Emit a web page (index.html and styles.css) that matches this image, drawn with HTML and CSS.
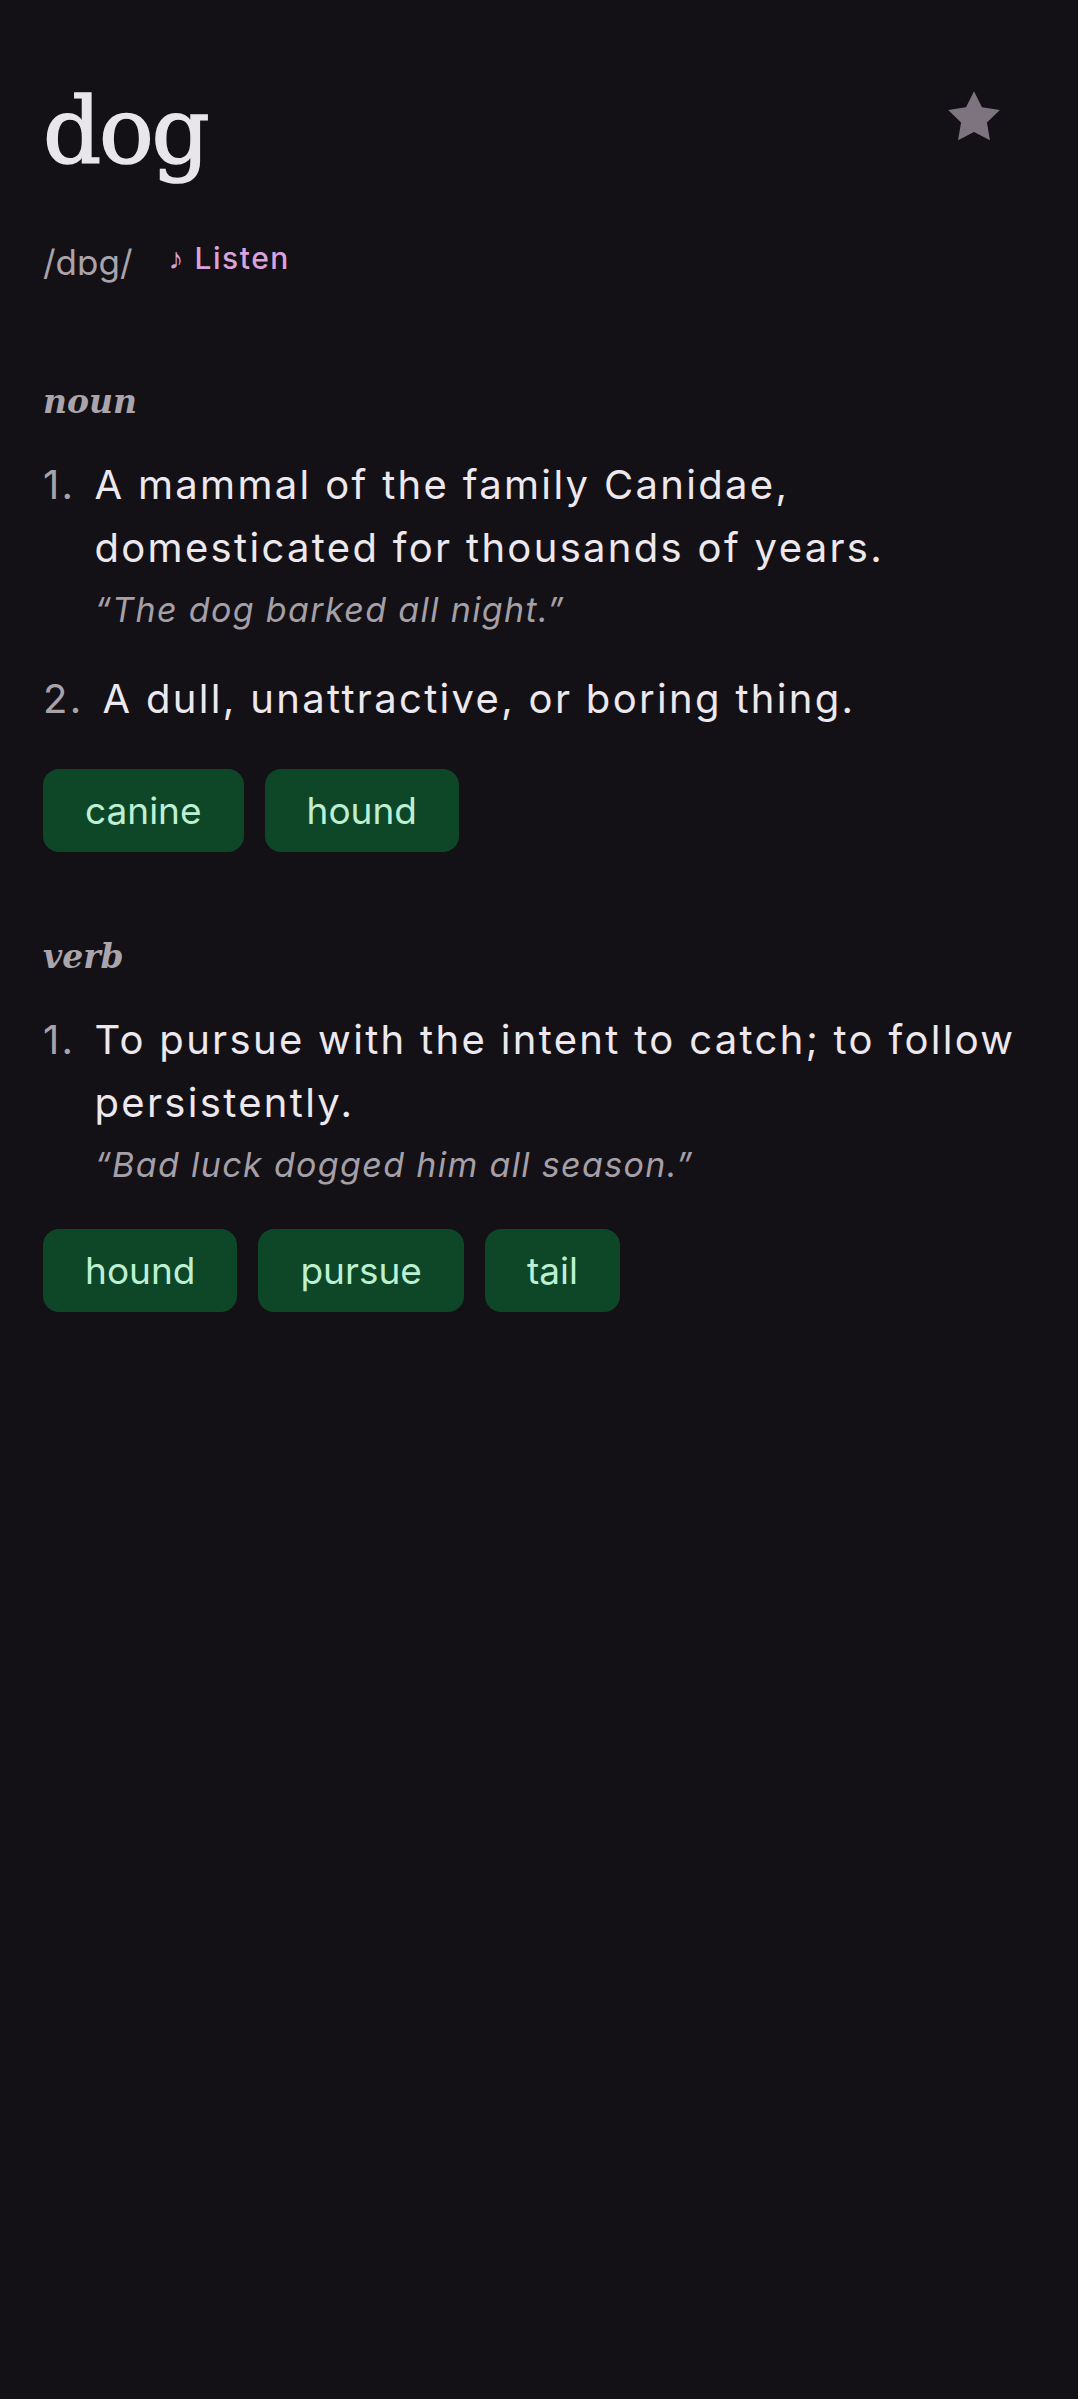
FILE: index.html
```html
<!DOCTYPE html>
<html lang="en">
<head>
<meta charset="utf-8">
<title>dog</title>
<link rel="stylesheet" href="styles.css">
</head>
<body>
<main class="page">
  <header class="head">
    <h1 class="word">dog</h1>
    <button class="fav" aria-label="Favourite">
      <svg viewBox="0 0 24 24" width="62" height="62"><polygon points="12,2 15.09,8.26 22,9.27 17,14.14 18.18,21.02 12,17.77 5.82,21.02 7,14.14 2,9.27 8.91,8.26" fill="#7d7480"/></svg>
    </button>
  </header>
  <div class="pron">
    <span class="ipa">/dɒg/</span>
    <button class="listen">♪ Listen</button>
  </div>

  <section class="pos">
    <h2 class="pos-label">noun</h2>
    <ol class="defs">
      <li class="def">
        <span class="num">1.</span>
        <div class="body">
          <p class="text">A mammal of the family Canidae, domesticated for thousands of years.</p>
          <p class="example">“The dog barked all night.”</p>
        </div>
      </li>
      <li class="def">
        <span class="num">2.</span>
        <div class="body">
          <p class="text">A dull, unattractive, or boring thing.</p>
        </div>
      </li>
    </ol>
    <div class="chips">
      <span class="chip">canine</span>
      <span class="chip">hound</span>
    </div>
  </section>

  <section class="pos">
    <h2 class="pos-label">verb</h2>
    <ol class="defs">
      <li class="def">
        <span class="num">1.</span>
        <div class="body">
          <p class="text">To pursue with the intent to catch; to follow persistently.</p>
          <p class="example">“Bad luck dogged him all season.”</p>
        </div>
      </li>
    </ol>
    <div class="chips">
      <span class="chip">hound</span>
      <span class="chip">pursue</span>
      <span class="chip">tail</span>
    </div>
  </section>
</main>
</body>
</html>
```
FILE: styles.css
```css
html, body {
  margin: 0;
  padding: 0;
  background: #131115;
}
body {
  min-height: 2399px;
  font-family: Inter, "Noto Sans", sans-serif;
  color: #ece8ee;
}
.page {
  padding: 77px 43px 0 43px;
}
.head {
  display: flex;
  justify-content: space-between;
  align-items: flex-start;
}
.word {
  margin: 0;
  font-family: "DejaVu Serif", serif;
  font-weight: 400;
  font-size: 91px;
  line-height: 110px;
  letter-spacing: -0.025em;
  -webkit-text-stroke: 1.6px #e9e6eb;
  color: #e9e6eb;
}
.fav {
  margin: 9px 30px 0 0;
  padding: 0;
  width: 62px;
  height: 62px;
  border: 0;
  background: none;
  display: flex;
}
.pron {
  margin-top: 50px;
  display: flex;
  align-items: center;
  gap: 36px;
}
.ipa {
  font-size: 35px;
  line-height: 50px;
  color: #a9a3ac;
}
.listen {
  border: 0;
  background: none;
  padding: 0 0 9px 0;
  font-family: Inter, sans-serif;
  font-size: 30px;
  line-height: 1.2;
  font-weight: 500;
  color: #d9a2da;
  letter-spacing: 0.05em;
}
.pos {
  margin-top: 90px;
}
.pos + .pos {
  margin-top: 80px;
}
.pos-label {
  margin: 0;
  font-family: "DejaVu Serif", serif;
  font-style: italic;
  font-weight: 700;
  font-size: 33px;
  line-height: 50px;
  color: #aaa4ad;
}
.defs {
  list-style: none;
  margin: 26px 0 0 0;
  padding: 0;
  display: flex;
  flex-direction: column;
  gap: 32px;
}
.def {
  display: flex;
  gap: 19px;
  font-size: 40px;
  line-height: 63px;
  letter-spacing: 0.058em;
}
.num {
  color: #a8a2ab;
}
.body p {
  margin: 0;
}
.text {
  color: #ece8ee;
}
.example {
  margin-top: 6px !important;
  font-style: italic;
  font-size: 34px;
  line-height: 50px;
  letter-spacing: 0.04em;
  color: #a59fa8;
}
.chips {
  margin-top: 39px;
  display: flex;
  gap: 21px;
}
.chip {
  padding: 19px 42px;
  font-size: 37px;
  line-height: 45px;
  border-radius: 16px;
  background: #0e4728;
  color: #bdf0d3;
}
```
